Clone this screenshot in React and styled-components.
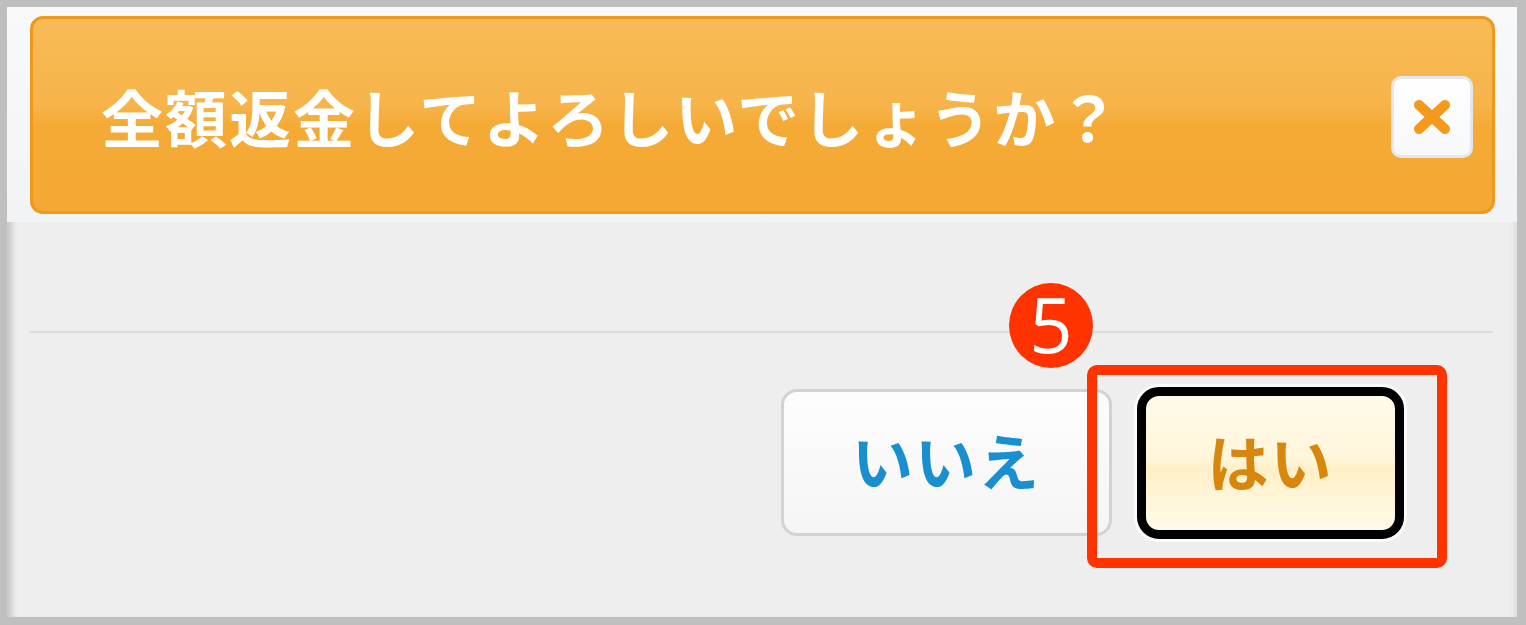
import React from 'react';
import styled, { createGlobalStyle } from 'styled-components';

const GlobalStyle = createGlobalStyle`
  html, body {
    margin: 0;
    padding: 0;
    background: #bfbfbf;
  }
  * {
    box-sizing: border-box;
  }
`;

const Frame = styled.div`
  width: 1526px;
  height: 625px;
  padding: 7px 9px 8px 7px;
  background: #bfbfbf;
  font-family: "Noto Sans CJK JP", "Noto Sans", sans-serif;
`;

const Panel = styled.div`
  position: relative;
  height: 100%;
  display: flex;
  flex-direction: column;
  background: #eeeeee;
  box-shadow: inset 9px 0 6px -4px rgba(0, 0, 0, 0.16),
    inset -9px 0 6px -6px rgba(0, 0, 0, 0.08);
`;

const TopArea = styled.div`
  padding: 9px 22px 8px 23px;
  background: linear-gradient(#f7f9fb, #f1f3f5);
`;

const Header = styled.div`
  height: 198px;
  display: flex;
  align-items: center;
  justify-content: space-between;
  padding: 0 19px 0 68px;
  border: 3px solid #ed9a1c;
  border-radius: 13px;
  background: linear-gradient(#f8bb56 0%, #f6b44a 45%, #f5aa36 55%, #f5a934 100%);
`;

const Title = styled.h1`
  margin: 0;
  color: #ffffff;
  font-size: 62px;
  font-weight: 700;
  letter-spacing: 2px;
  line-height: 1;
  padding-top: 2px;
`;

const CloseButton = styled.button`
  width: 82px;
  height: 82px;
  display: flex;
  align-items: center;
  justify-content: center;
  padding: 0;
  background: linear-gradient(#ffffff, #f7f8fa);
  border: 3px solid #e3e8f0;
  border-radius: 10px;
  margin-top: 4px;
`;

const Spacer = styled.div`
  flex: 0 0 109px;
`;

const Divider = styled.hr`
  margin: 0 24px 0 23px;
  border: none;
  height: 2px;
  background: #dbdbdb;
`;

const Footer = styled.div`
  flex: 1;
  display: flex;
  justify-content: flex-end;
  align-items: flex-start;
  gap: 25px;
  padding: 54px 113px 0 0;
`;

const NoButton = styled.button`
  width: 331px;
  height: 147px;
  margin-top: 2px;
  border: 3px solid #d2d2d2;
  border-radius: 16px;
  background: linear-gradient(#fdfdfd, #f5f5f5);
  color: #1a8fd0;
  font-family: inherit;
  font-size: 61px;
  font-weight: 700;
  letter-spacing: 2px;
  padding: 0 0 6px;
`;

const YesWrap = styled.div`
  position: relative;
`;

const YesButton = styled.button`
  width: 267px;
  height: 152px;
  border: 9px solid #000000;
  border-radius: 22px;
  box-shadow: 0 0 0 3px #fbfbfb;
  background: linear-gradient(#fffbea 0%, #fff6dc 45%, #fff0c8 55%, #fffae8 100%);
  color: #d7870d;
  font-family: inherit;
  font-size: 61px;
  font-weight: 700;
  letter-spacing: 2px;
  padding: 0 0 6px;
`;

const Highlight = styled.div`
  position: absolute;
  left: -50px;
  top: -22px;
  width: 360px;
  height: 203px;
  border: 10px solid #ff3300;
  border-radius: 10px;
  pointer-events: none;
`;

const StepBadge = styled.div`
  position: absolute;
  left: -128px;
  top: -104px;
  width: 84px;
  height: 85px;
  border-radius: 50%;
  background: #ff3300;
  color: #ffffff;
  display: flex;
  align-items: center;
  justify-content: center;
  font-family: "Open Sans", "Noto Sans", sans-serif;
  font-size: 76px;
  font-weight: 400;
  line-height: 1;
  padding-bottom: 4px;
`;

const CloseIcon = () => (
  <svg width="42" height="36" viewBox="0 0 42 36">
    <path d="M8 6 L34 30 M34 6 L8 30" stroke="#f39a1d" strokeWidth="10" strokeLinecap="round" />
  </svg>
);

export default function App() {
  return (
    <>
      <GlobalStyle />
      <Frame>
        <Panel>
          <TopArea>
            <Header>
              <Title>全額返金してよろしいでしょうか？</Title>
              <CloseButton aria-label="閉じる">
                <CloseIcon />
              </CloseButton>
            </Header>
          </TopArea>
          <Spacer />
          <Divider />
          <Footer>
            <NoButton>いいえ</NoButton>
            <YesWrap>
              <YesButton>はい</YesButton>
              <Highlight />
              <StepBadge>5</StepBadge>
            </YesWrap>
          </Footer>
        </Panel>
      </Frame>
    </>
  );
}
